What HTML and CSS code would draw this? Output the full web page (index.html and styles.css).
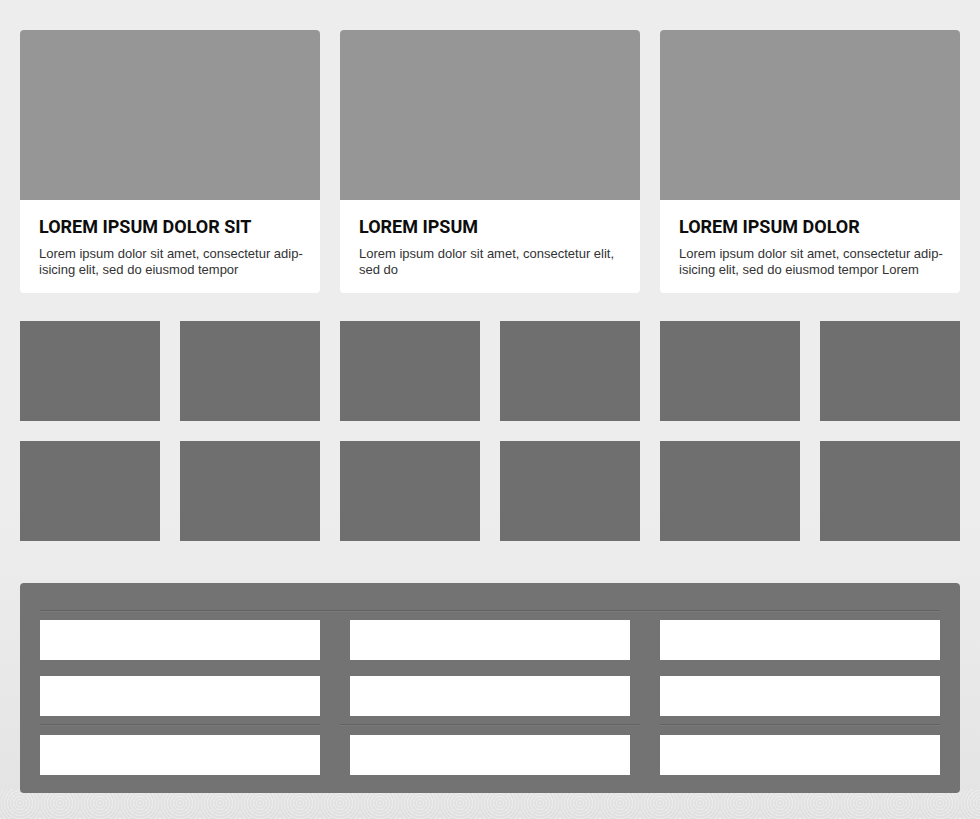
FILE: index.html
```html
<!DOCTYPE html>
<html lang="en">
<head>
<meta charset="utf-8">
<title>Layout</title>
<link rel="stylesheet" href="styles.css">
</head>
<body>
<main class="page">
  <section class="cards">
    <article class="card">
      <div class="card-media"></div>
      <div class="card-body">
        <h2 class="card-title">LOREM IPSUM DOLOR SIT</h2>
        <p class="card-text">Lorem ipsum dolor sit amet, consectetur adip-<br>isicing elit, sed do eiusmod tempor</p>
      </div>
    </article>
    <article class="card">
      <div class="card-media"></div>
      <div class="card-body">
        <h2 class="card-title">LOREM IPSUM</h2>
        <p class="card-text">Lorem ipsum dolor sit amet, consectetur elit,<br>sed do</p>
      </div>
    </article>
    <article class="card">
      <div class="card-media"></div>
      <div class="card-body">
        <h2 class="card-title">LOREM IPSUM DOLOR</h2>
        <p class="card-text">Lorem ipsum dolor sit amet, consectetur adip-<br>isicing elit, sed do eiusmod tempor Lorem</p>
      </div>
    </article>
  </section>

  <section class="tiles">
    <div class="tile"></div><div class="tile"></div><div class="tile"></div>
    <div class="tile"></div><div class="tile"></div><div class="tile"></div>
    <div class="tile"></div><div class="tile"></div><div class="tile"></div>
    <div class="tile"></div><div class="tile"></div><div class="tile"></div>
  </section>

  <section class="panel">
    <div class="rule rule-top"></div>
    <div class="form-grid">
      <div class="col col-a">
        <div class="field"></div>
        <div class="field"></div>
        <div class="rule"></div>
        <div class="field"></div>
      </div>
      <div class="col col-b">
        <div class="field"></div>
        <div class="field"></div>
        <div class="rule"></div>
        <div class="field"></div>
      </div>
      <div class="col col-c">
        <div class="field"></div>
        <div class="field"></div>
        <div class="rule"></div>
        <div class="field"></div>
      </div>
    </div>
  </section>
</main>
<div class="footer-strip"></div>
</body>
</html>
```

FILE: styles.css
```css
* { box-sizing: border-box; }

html, body {
  margin: 0;
  padding: 0;
}

body {
  width: 980px;
  height: 819px;
  overflow: hidden;
  position: relative;
  background: linear-gradient(to bottom, #ededed 0%, #ededed 62%, #e9e9e9 80%, #e3e3e3 100%);
  font-family: "Liberation Sans", Arial, sans-serif;
}

.page {
  padding: 30px 20px 0;
}

.cards {
  display: grid;
  grid-template-columns: repeat(3, 300px);
  gap: 20px;
}

.card {
  background: #ffffff;
  border-radius: 4px;
  overflow: hidden;
}

.card-media {
  height: 170px;
  background: #969696;
}

.card-body {
  padding: 16px 8px 15px 19px;
}

.card-title {
  margin: 0;
  font-family: Roboto, "Liberation Sans", sans-serif;
  font-weight: 700;
  font-size: 18px;
  line-height: 22px;
  color: #0d0d0d;
  white-space: nowrap;
}

.card-text {
  margin: 8px 0 0;
  font-size: 13px;
  line-height: 16px;
  color: #333333;
  white-space: nowrap;
}

.tiles {
  margin-top: 28px;
  display: grid;
  grid-template-columns: repeat(6, 140px);
  grid-auto-rows: 100px;
  gap: 20px;
}

.tile {
  background: #6f6f6f;
}

.panel {
  margin-top: 42px;
  height: 210px;
  background: #737373;
  border-radius: 4px;
  padding: 27px 20px 18px;
  position: relative;
  z-index: 1;
}

.rule {
  height: 2px;
  border-radius: 1px;
  background: linear-gradient(to bottom, #626262 0 1px, #7b7b7b 1px 2px);
}

.rule-top {
  margin-bottom: 8px;
}

.form-grid {
  display: grid;
  grid-template-columns: 280px 300px 280px;
  column-gap: 20px;
}

.col {
  display: flex;
  flex-direction: column;
}

.col-b .field {
  margin-left: 10px;
  margin-right: 10px;
}

.field {
  height: 40px;
  background: #ffffff;
}

.field + .field {
  margin-top: 16px;
}

.col .rule {
  margin: 8px 0 9px;
}

.footer-strip {
  position: absolute;
  left: 0;
  right: 0;
  bottom: 0;
  height: 30px;
  background:
    repeating-radial-gradient(circle at 20px 14px, rgba(255,255,255,0.35) 0 1px, rgba(0,0,0,0) 1px 3px),
    linear-gradient(to bottom, #e4e4e4, #e0e0e0);
  background-size: 40px 30px, 100% 100%;
  opacity: 0.9;
}
```
